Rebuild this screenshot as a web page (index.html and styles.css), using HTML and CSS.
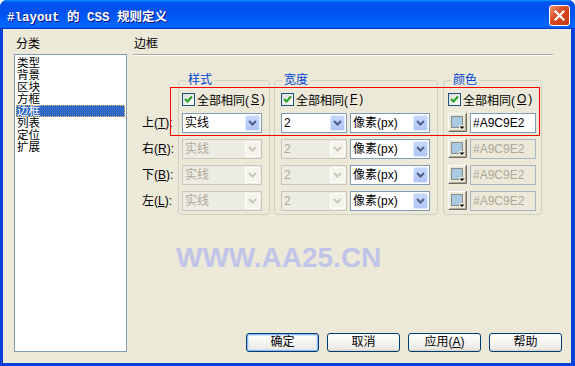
FILE: index.html
```html
<!DOCTYPE html>
<html lang="zh-CN">
<head>
  <meta charset="UTF-8">
  <title>#layout 的 CSS 规则定义</title>
  <link rel="stylesheet" href="styles.css">
</head>
<body>

  <div class="window">
    <div class="titlebar">
      <span class="title">#layout 的 CSS 规则定义</span>
      <span class="close">
        <svg width="19" height="19" viewBox="0 0 19 19"><path d="M5.5 5.5l8 8M13.5 5.5l-8 8" stroke="#fff" stroke-width="2.2" stroke-linecap="square"/></svg>
      </span>
    </div>

    <div class="client">
      <div class="cats">
        <div class="cap">分类</div>
        <ul class="list">
          <li>类型</li>
          <li>背景</li>
          <li>区块</li>
          <li>方框</li>
          <li class="on">边框</li>
          <li>列表</li>
          <li>定位</li>
          <li>扩展</li>
        </ul>
      </div>

      <div class="panel">
        <div class="heading">边框</div>

        <div class="opts">
          <div class="labels">
            <div>上(<u>T</u>):</div>
            <div>右(<u>R</u>):</div>
            <div>下(<u>B</u>):</div>
            <div>左(<u>L</u>):</div>
          </div>

          <fieldset class="grp grp-style">
            <legend>样式</legend>
            <div class="gb">
              <div class="chk-row">
                <span class="chk"><svg width="11" height="11" viewBox="0 0 11 11"><path d="M2 5l2.5 2.5L9 2.5" fill="none" stroke="#21a121" stroke-width="2"/></svg></span>
                全部相同(<u>S</u>)
              </div>
              <div class="row">
                <div class="combo w80"><span class="val">实线</span><span class="arr"><svg width="9" height="6" viewBox="0 0 9 6"><path d="M1 1l3.5 3.5L8 1" fill="none" stroke="currentColor" stroke-width="2"/></svg></span></div>
              </div>
              <div class="row">
                <div class="combo w80 off"><span class="val">实线</span><span class="arr"><svg width="9" height="6" viewBox="0 0 9 6"><path d="M1 1l3.5 3.5L8 1" fill="none" stroke="currentColor" stroke-width="2"/></svg></span></div>
              </div>
              <div class="row">
                <div class="combo w80 off"><span class="val">实线</span><span class="arr"><svg width="9" height="6" viewBox="0 0 9 6"><path d="M1 1l3.5 3.5L8 1" fill="none" stroke="currentColor" stroke-width="2"/></svg></span></div>
              </div>
              <div class="row">
                <div class="combo w80 off"><span class="val">实线</span><span class="arr"><svg width="9" height="6" viewBox="0 0 9 6"><path d="M1 1l3.5 3.5L8 1" fill="none" stroke="currentColor" stroke-width="2"/></svg></span></div>
              </div>
            </div>
          </fieldset>

          <fieldset class="grp grp-width">
            <legend>宽度</legend>
            <div class="gb">
              <div class="chk-row">
                <span class="chk"><svg width="11" height="11" viewBox="0 0 11 11"><path d="M2 5l2.5 2.5L9 2.5" fill="none" stroke="#21a121" stroke-width="2"/></svg></span>
                全部相同(<u>F</u>)
              </div>
              <div class="row">
                <div class="combo w66"><span class="val">2</span><span class="arr"><svg width="9" height="6" viewBox="0 0 9 6"><path d="M1 1l3.5 3.5L8 1" fill="none" stroke="currentColor" stroke-width="2"/></svg></span></div>
                <div class="combo w80"><span class="val">像素(px)</span><span class="arr"><svg width="9" height="6" viewBox="0 0 9 6"><path d="M1 1l3.5 3.5L8 1" fill="none" stroke="currentColor" stroke-width="2"/></svg></span></div>
              </div>
              <div class="row">
                <div class="combo w66 off"><span class="val">2</span><span class="arr"><svg width="9" height="6" viewBox="0 0 9 6"><path d="M1 1l3.5 3.5L8 1" fill="none" stroke="currentColor" stroke-width="2"/></svg></span></div>
                <div class="combo w80"><span class="val">像素(px)</span><span class="arr"><svg width="9" height="6" viewBox="0 0 9 6"><path d="M1 1l3.5 3.5L8 1" fill="none" stroke="currentColor" stroke-width="2"/></svg></span></div>
              </div>
              <div class="row">
                <div class="combo w66 off"><span class="val">2</span><span class="arr"><svg width="9" height="6" viewBox="0 0 9 6"><path d="M1 1l3.5 3.5L8 1" fill="none" stroke="currentColor" stroke-width="2"/></svg></span></div>
                <div class="combo w80"><span class="val">像素(px)</span><span class="arr"><svg width="9" height="6" viewBox="0 0 9 6"><path d="M1 1l3.5 3.5L8 1" fill="none" stroke="currentColor" stroke-width="2"/></svg></span></div>
              </div>
              <div class="row">
                <div class="combo w66 off"><span class="val">2</span><span class="arr"><svg width="9" height="6" viewBox="0 0 9 6"><path d="M1 1l3.5 3.5L8 1" fill="none" stroke="currentColor" stroke-width="2"/></svg></span></div>
                <div class="combo w80"><span class="val">像素(px)</span><span class="arr"><svg width="9" height="6" viewBox="0 0 9 6"><path d="M1 1l3.5 3.5L8 1" fill="none" stroke="currentColor" stroke-width="2"/></svg></span></div>
              </div>
            </div>
          </fieldset>

          <fieldset class="grp grp-color">
            <legend>颜色</legend>
            <div class="gb">
              <div class="chk-row">
                <span class="chk"><svg width="11" height="11" viewBox="0 0 11 11"><path d="M2 5l2.5 2.5L9 2.5" fill="none" stroke="#21a121" stroke-width="2"/></svg></span>
                全部相同(<u>O</u>)
              </div>
              <div class="row">
                <span class="swatch"><svg width="19" height="19" viewBox="0 0 19 19"><rect width="19" height="19" fill="#ece9d8"/><path d="M.5 18V.5H18" stroke="#fff" fill="none"/><path d="M.5 18.5h18V0" stroke="#716f64" fill="none"/><path d="M1.5 17.5h16V1" stroke="#aca899" fill="none"/><rect x="3.5" y="3.5" width="11" height="11" fill="#a9c9e2" stroke="#8a8a8a"/><rect x="11" y="12" width="6" height="5" fill="#ece9d8"/><path d="M11.5 13.5h5L14 16z" fill="#000"/></svg></span>
                <span class="hex">#A9C9E2</span>
              </div>
              <div class="row">
                <span class="swatch"><svg width="19" height="19" viewBox="0 0 19 19"><rect width="19" height="19" fill="#ece9d8"/><path d="M.5 18V.5H18" stroke="#fff" fill="none"/><path d="M.5 18.5h18V0" stroke="#716f64" fill="none"/><path d="M1.5 17.5h16V1" stroke="#aca899" fill="none"/><rect x="3.5" y="3.5" width="11" height="11" fill="#a9c9e2" stroke="#8a8a8a"/><rect x="11" y="12" width="6" height="5" fill="#ece9d8"/><path d="M11.5 13.5h5L14 16z" fill="#000"/></svg></span>
                <span class="hex off">#A9C9E2</span>
              </div>
              <div class="row">
                <span class="swatch"><svg width="19" height="19" viewBox="0 0 19 19"><rect width="19" height="19" fill="#ece9d8"/><path d="M.5 18V.5H18" stroke="#fff" fill="none"/><path d="M.5 18.5h18V0" stroke="#716f64" fill="none"/><path d="M1.5 17.5h16V1" stroke="#aca899" fill="none"/><rect x="3.5" y="3.5" width="11" height="11" fill="#a9c9e2" stroke="#8a8a8a"/><rect x="11" y="12" width="6" height="5" fill="#ece9d8"/><path d="M11.5 13.5h5L14 16z" fill="#000"/></svg></span>
                <span class="hex off">#A9C9E2</span>
              </div>
              <div class="row">
                <span class="swatch"><svg width="19" height="19" viewBox="0 0 19 19"><rect width="19" height="19" fill="#ece9d8"/><path d="M.5 18V.5H18" stroke="#fff" fill="none"/><path d="M.5 18.5h18V0" stroke="#716f64" fill="none"/><path d="M1.5 17.5h16V1" stroke="#aca899" fill="none"/><rect x="3.5" y="3.5" width="11" height="11" fill="#a9c9e2" stroke="#8a8a8a"/><rect x="11" y="12" width="6" height="5" fill="#ece9d8"/><path d="M11.5 13.5h5L14 16z" fill="#000"/></svg></span>
                <span class="hex off">#A9C9E2</span>
              </div>
            </div>
          </fieldset>
        </div>

        <div class="buttons">
          <span class="btn def">确定</span>
          <span class="btn">取消</span>
          <span class="btn">应用(<u>A</u>)</span>
          <span class="btn">帮助</span>
        </div>
      </div>

      <div class="watermark">WWW.AA25.CN</div>
      <div class="redbox"></div>
    </div>
  </div>

</body>
</html>
```

FILE: styles.css
```css
body {
  margin: 0;
  background: #fff;
  font-family: "Liberation Sans", "Noto Sans CJK SC", sans-serif;
  font-size: 12px;
  color: #000;
}

.window {
  width: 575px;
  height: 366px;
  box-sizing: border-box;
  display: flex;
  flex-direction: column;
  background: #0842d8;
  border-radius: 7px 7px 0 0;
  overflow: hidden;
}

.titlebar {
  height: 29px;
  flex: none;
  box-sizing: border-box;
  display: flex;
  align-items: center;
  justify-content: space-between;
  padding: 2px 5px 0 7px;
  background: linear-gradient(180deg, #0997ff, #0053ee 8%, #0050ee 40%, #06f 88%, #06f 93%, #005bff 95%, #003dd7 96%, #003dd7);
}

.title {
  color: #fff;
  font-family: "Liberation Mono", "Noto Sans CJK SC", monospace;
  font-weight: bold;
  font-size: 12.5px;
  text-shadow: 1px 1px #0f1089;
}

.close {
  width: 21px;
  height: 21px;
  box-sizing: border-box;
  border: 1px solid #fff;
  border-radius: 3px;
  background: linear-gradient(135deg, #ec9272, #d9481f 45%, #c23b12);
  display: flex;
  align-items: center;
  justify-content: center;
}

.client {
  flex: 1;
  position: relative;
  display: flex;
  margin: 0 4px 3px 3px;
  padding: 8px 9px 11px 11px;
  background: #ece9d8;
}

/* category list */
.cats {
  width: 113px;
  display: flex;
  flex-direction: column;
}
.cap {
  height: 17px;
  line-height: 14px;
  padding-left: 2px;
}
.list {
  flex: 1;
  margin: 0;
  padding: 2px 1px;
  list-style: none;
  background: #fff;
  border: 1px solid #7f9db9;
}
.list li {
  height: 12px;
  font-size: 11.5px;
  line-height: 12px;
  padding-left: 1px;
  overflow: hidden;
}
.list li.on {
  background: #316ac5;
  color: #fff;
  outline: 1px dotted #e8c060;
  outline-offset: -1px;
}

/* right panel */
.panel {
  flex: 1;
  margin-left: 6px;
  display: flex;
  flex-direction: column;
}
.heading {
  height: 17px;
  line-height: 14px;
  padding-left: 1px;
  margin-right: 9px;
  border-bottom: 1px solid #aca899;
  box-shadow: 0 1px #fff;
}

.opts {
  display: flex;
  align-items: flex-start;
  margin-top: 18px;
  padding-left: 9px;
}
.labels {
  width: 36px;
  margin-top: 40px;
}
.labels div {
  height: 20px;
  line-height: 20px;
  margin-bottom: 6px;
}

.grp {
  margin: 0;
  padding: 0;
  border: 1px solid #d0d0bf;
  border-radius: 4px;
  box-sizing: border-box;
  min-width: 0;
}
.grp legend {
  margin-left: 7px;
  padding: 0 2px;
  line-height: 14px;
  color: #0046d5;
}
.grp-style { width: 92px; }
.grp-width { width: 164px; margin-left: 4px; }
.grp-color { width: 99px; margin-left: 5px; }
.gb { padding: 2px 0 3px 3px; }
.grp-width .gb { padding-left: 6px; }
.grp-color .gb { padding-left: 4px; }

.chk-row {
  display: flex;
  align-items: center;
  gap: 2px;
  height: 20px;
  margin-bottom: 4px;
  white-space: nowrap;
}
.chk {
  width: 13px;
  height: 13px;
  box-sizing: border-box;
  border: 1px solid #1c5180;
  background: linear-gradient(135deg, #dcdcd7, #fff);
  display: flex;
}

.row {
  display: flex;
  gap: 3px;
  height: 20px;
  margin-bottom: 6px;
}
.row:last-child { margin-bottom: 0; }

.combo {
  box-sizing: border-box;
  height: 20px;
  border: 1px solid #7f9db9;
  background: #fff;
  display: flex;
  padding: 1px;
}
.combo .val {
  flex: 1;
  line-height: 16px;
  padding-left: 1px;
  white-space: nowrap;
}
.combo .arr {
  width: 15px;
  box-sizing: border-box;
  border: 1px solid #dfe8fd;
  border-radius: 2px;
  background: linear-gradient(#c6d7fc, #b1c6f6);
  color: #4d6185;
  display: flex;
  align-items: center;
  justify-content: center;
}
.combo.off {
  border-color: #c9c7ba;
  background: #edece2;
  color: #aca899;
}
.combo.off .arr {
  border-color: #fff;
  background: #f4f3ec;
  color: #c9c7ba;
}
.w80 { width: 80px; }
.w66 { width: 66px; }

.swatch {
  width: 19px;
  height: 19px;
  display: flex;
}
.hex {
  width: 66px;
  height: 20px;
  box-sizing: border-box;
  border: 1px solid #7f9db9;
  background: #fff;
  padding-left: 2px;
  line-height: 18px;
}
.hex.off {
  border-color: #a7b5c6;
  background: #ece9d8;
  color: #aca899;
}

/* dialog buttons */
.buttons {
  margin-top: auto;
  display: flex;
  justify-content: flex-end;
  gap: 8px;
}
.btn {
  width: 73px;
  height: 19px;
  box-sizing: border-box;
  border: 1px solid #003c74;
  border-radius: 3px;
  background: linear-gradient(#fff, #ecebe6 86%, #d6d0c5);
  text-align: center;
  line-height: 17px;
}
.btn.def {
  box-shadow: inset 0 0 0 1px #98b4e8, inset 0 0 0 2px #cee7ff;
}

/* overlays on the screenshot */
.watermark {
  position: absolute;
  left: 173px;
  top: 215px;
  font-family: "Liberation Sans", sans-serif;
  font-weight: bold;
  font-size: 28px;
  line-height: 28px;
  color: #c0c4e8;
}
.redbox {
  position: absolute;
  left: 167px;
  top: 58px;
  width: 370px;
  height: 49px;
  box-sizing: border-box;
  border: 1px solid #f00;
}
```
